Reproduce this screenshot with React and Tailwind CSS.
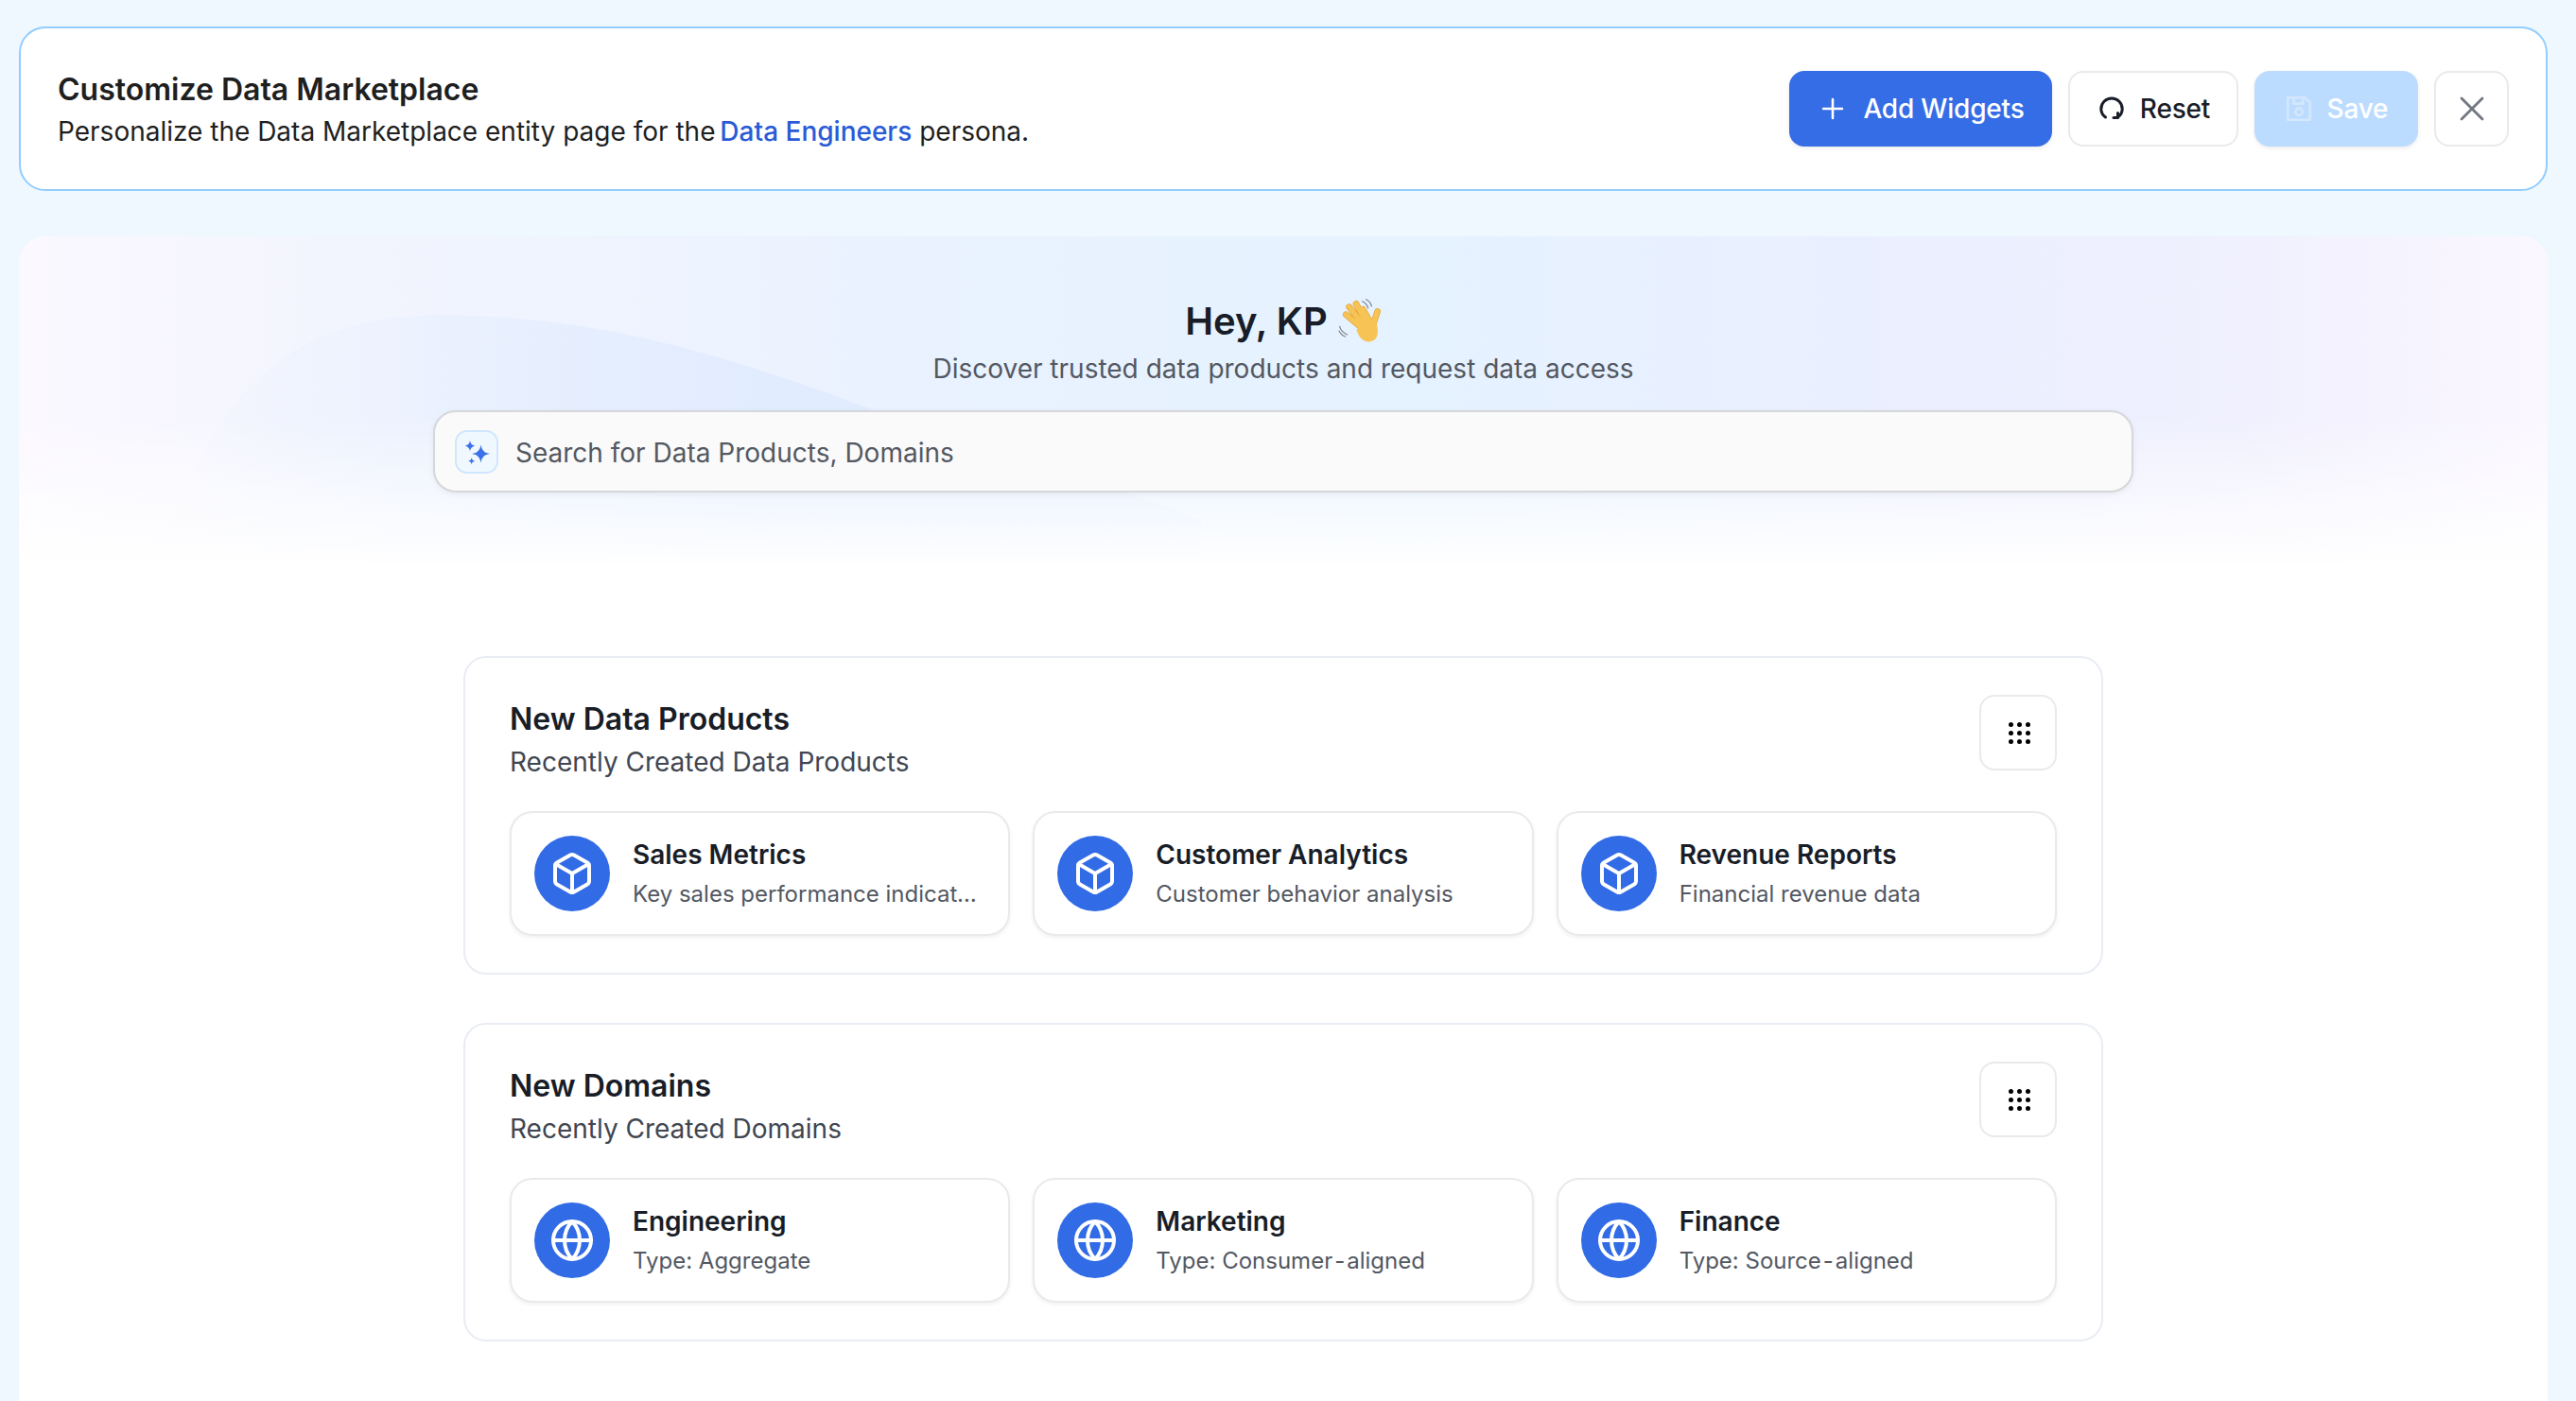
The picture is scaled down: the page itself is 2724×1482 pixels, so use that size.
import React from "react";
import { Plus, X, Box, Globe } from "lucide-react";

const products = [
  { name: "Sales Metrics", desc: "Key sales performance indicators" },
  { name: "Customer Analytics", desc: "Customer behavior analysis" },
  { name: "Revenue Reports", desc: "Financial revenue data" },
];

const domains = [
  { name: "Engineering", desc: "Type: Aggregate" },
  { name: "Marketing", desc: "Type: Consumer", tail: "aligned" },
  { name: "Finance", desc: "Type: Source", tail: "aligned" },
];

function ResetIcon() {
  return (
    <svg width="32" height="32" viewBox="0 0 32 32" fill="none" stroke="#181d27" strokeWidth="3" strokeLinecap="round" strokeLinejoin="round">
      <path d="M9.500 25C6.500 22.800 4.800 19.800 4.800 16.200C4.800 10 9.800 5 16 5S27.200 10 27.200 16.200C27.200 19.800 25.500 22.800 22.500 25" />
      <path d="M22.500 20.500V25.500H18" />
    </svg>
  );
}

function SaveIcon() {
  return (
    <svg width="30" height="30" viewBox="0 0 28 28" fill="none" stroke="#d4e7fd" strokeWidth="2.400" strokeLinejoin="round">
      <path d="M3 3H20L25 8V25H3Z" />
      <path d="M9 3V9H18V3" />
      <circle cx="14" cy="17" r="3.500" />
    </svg>
  );
}

function Sparkles() {
  return (
    <svg width="42" height="42" viewBox="0 0 42 42" fill="#3b71e8">
      <path d="M25.500 13.500C26.400 19.300 29.200 22.100 35 23C29.200 23.900 26.400 26.700 25.500 32.500C24.600 26.700 21.800 23.900 16 23C21.800 22.100 24.600 19.300 25.500 13.500Z" />
      <path d="M14 9C14.500 12.400 16.300 14.200 19.500 14.700C16.300 15.200 14.500 17 14 20.200C13.500 17 11.700 15.200 8.500 14.700C11.700 14.200 13.500 12.400 14 9Z" />
      <path d="M15.700 27C16 29.200 17.200 30.400 19.200 30.700C17.200 31 16 32.200 15.700 34.200C15.400 32.200 14.200 31 12.200 30.700C14.200 30.400 15.400 29.200 15.700 27Z" />
    </svg>
  );
}

// no emoji font in the sandbox, so the hand is drawn
function WavingHand() {
  return (
    <svg className="ml-[2px] mr-[-9px] shrink-0" width="64" height="60" viewBox="0 0 192 180" fill="none" strokeLinecap="round">
      <path d="M110 118L52 68M112 108L62 44M120 100L84 34M132 98L106 52M132 118L152 58" stroke="#e2a437" strokeWidth="20" />
      <path d="M86 118C96 154 122 160 140 150C156 140 156 112 146 92C130 78 100 84 86 118Z" fill="#f7c355" />
      <path d="M110 118L52 68M112 108L62 44M120 100L84 34M132 98L106 52M132 118L152 58" stroke="#f7c355" strokeWidth="16" />
      <path d="M104 26C112 30 120 38 122 48M116 20C124 24 131 32 133 42" stroke="#7d8189" strokeWidth="3.500" />
      <path d="M32 106C34 116 44 128 56 132M30 120C34 128 42 136 50 138" stroke="#7d8189" strokeWidth="3.500" />
    </svg>
  );
}

function GripDots() {
  return (
    <div className="grid grid-cols-3 gap-[4px] translate-x-[1px]">
      {[0, 1, 2, 3, 4, 5, 6, 7, 8].map((i) => (
        <span key={i} className="w-[5px] h-[5px] rounded-full bg-black" />
      ))}
    </div>
  );
}

function Item({ item, Icon }) {
  return (
    <div className="flex items-center gap-6 min-w-0 h-[132px] px-[24px] bg-white border-2 border-[#e9eaeb] rounded-[24px] shadow-[0_2px_4px_rgba(10,13,18,0.06)]">
      <div className="w-20 h-20 shrink-0 rounded-full bg-[#316be5] flex items-center justify-center">
        <Icon size={48} color="#ffffff" strokeWidth={2} />
      </div>
      <div className="min-w-0">
        <div className="text-[28px] leading-[40px] font-semibold text-[#181d27] truncate">{item.name}</div>
        <div className="text-[24px] leading-[36px] mt-[4px] text-[#535862] truncate">
          {item.desc}
          {item.tail && (
            <>
              <span className="px-[2px]">-</span>
              {item.tail}
            </>
          )}
        </div>
      </div>
    </div>
  );
}

function Section({ title, subtitle, items, Icon }) {
  return (
    <section className="bg-white border-2 border-[#e9edf3] rounded-[24px] h-[337px] pt-[39px] px-[47px]">
      <div className="flex justify-between">
        <div className="pt-[2px]">
          <h2 className="text-[32px] leading-[48px] font-semibold text-[#181d27]">{title}</h2>
          <p className="text-[28px] leading-[40px] mt-[1px] text-[#414651]">{subtitle}</p>
        </div>
        <button className="w-[82px] h-[80px] border-2 border-[#e9eaeb] rounded-[16px] flex items-center justify-center">
          <GripDots />
        </button>
      </div>
      <div className="grid grid-cols-3 gap-6 mt-[32px]">
        {items.map((item) => (
          <Item key={item.name} item={item} Icon={Icon} />
        ))}
      </div>
    </section>
  );
}

export default function App() {
  return (
    <div className="min-h-screen bg-[#eff7ff] px-5 pt-[28px] font-['Inter',sans-serif]">
      {/* customize bar */}
      <header className="flex items-center justify-between h-[174px] pl-[39px] pr-[39px] w-[2674px] bg-white border-2 border-[#93cdfd] rounded-[28px]">
        <div>
          <h1 className="text-[32px] leading-[44px] mt-[2px] font-semibold text-[#1f1f1f]">Customize Data Marketplace</h1>
          <p className="text-[28px] leading-[40px] mt-[2px] text-[#1f1f1f]">
            Personalize the Data Marketplace entity page for the <span className="ml-[-3px] text-[#2a5bd7] font-medium">Data Engineers</span> persona.
          </p>
        </div>
        <div className="flex items-center gap-[17px]">
          <button className="flex items-center justify-center gap-[15px] w-[278px] h-[80px] bg-[#356de6] text-white text-[28px] font-[450] tracking-[-0.2px] rounded-[16px] shadow-[0_2px_4px_rgba(10,13,18,0.08)]">
            <Plus size={34} strokeWidth={1.800} /> Add Widgets
          </button>
          <button className="flex items-center justify-center gap-[14px] w-[180px] h-[80px] bg-white border-2 border-[#e9eaeb] text-[#181d27] text-[28px] font-[450] tracking-[-0.2px] rounded-[16px]">
            <ResetIcon /> Reset
          </button>
          <button className="flex items-center justify-center gap-[15px] w-[173px] h-[80px] bg-[#bcdcff] text-white text-[28px] font-[450] tracking-[-0.2px] rounded-[16px] shadow-[0_2px_4px_rgba(10,13,18,0.08)]">
            <SaveIcon /> Save
          </button>
          <button className="flex items-center justify-center w-[79px] h-[80px] bg-white border-2 border-[#e9eaeb] rounded-[16px]">
            <X size={44} strokeWidth={1.500} color="#717680" />
          </button>
        </div>
      </header>

      {/* main panel */}
      <main className="relative mt-[48px] w-[2674px] h-[1232px] overflow-hidden bg-white rounded-t-[28px]">
        <div className="absolute inset-x-0 top-0 h-[350px] bg-[linear-gradient(90deg,#fbf8ff_0%,#f3f5fe_12%,#eaf2ff_35%,#e5f2ff_55%,#ebefff_75%,#f0f0fe_88%,#fbf7ff_100%)]" />
        <svg className="absolute left-0 top-0" width="1300" height="350" viewBox="0 0 1300 350" fill="none">
          <defs>
            <linearGradient id="wave" x1="150" y1="0" x2="800" y2="0" gradientUnits="userSpaceOnUse">
              <stop offset="0" stopColor="#e2edff" stopOpacity="0" />
              <stop offset="1" stopColor="#e0ebff" stopOpacity="0.9" />
            </linearGradient>
          </defs>
          <path d="M150 350C200 150 300 83 449 83C600 85 720 115 902 183C1000 220 1120 250 1250 300V350Z" fill="url(#wave)" />
        </svg>
        <div className="absolute inset-x-0 top-[190px] h-[160px] bg-gradient-to-b from-transparent to-white" />

        <div className="relative flex flex-col items-center">
          <div className="flex items-center mt-[65px] h-[50px]">
            <span className="text-[40px] leading-[50px] font-semibold text-[#181d27]">Hey, KP</span>
            <WavingHand />
          </div>
          <p className="text-[28px] leading-[40px] mt-[5px] text-[#535862]">Discover trusted data products and request data access</p>

          <div className="flex items-center w-[1798px] h-[87px] mt-[24px] pl-[21px] gap-[18px] bg-[#fafafa] border-2 border-[#d5d7da] rounded-[24px] shadow-[0_2px_6px_rgba(10,13,18,0.06)]">
            <div className="w-[46px] h-[46px] rounded-[13px] border-2 border-[#cfe6ff] bg-[#f0f8ff] flex items-center justify-center">
              <Sparkles />
            </div>
            <span className="text-[28px] text-[#535862] translate-y-[1px]">Search for Data Products, Domains</span>
          </div>

          <div className="w-[1734px] mt-[173px] flex flex-col gap-[51px]">
            <Section title="New Data Products" subtitle="Recently Created Data Products" items={products} Icon={Box} />
            <Section title="New Domains" subtitle="Recently Created Domains" items={domains} Icon={Globe} />
          </div>
        </div>
      </main>
    </div>
  );
}
